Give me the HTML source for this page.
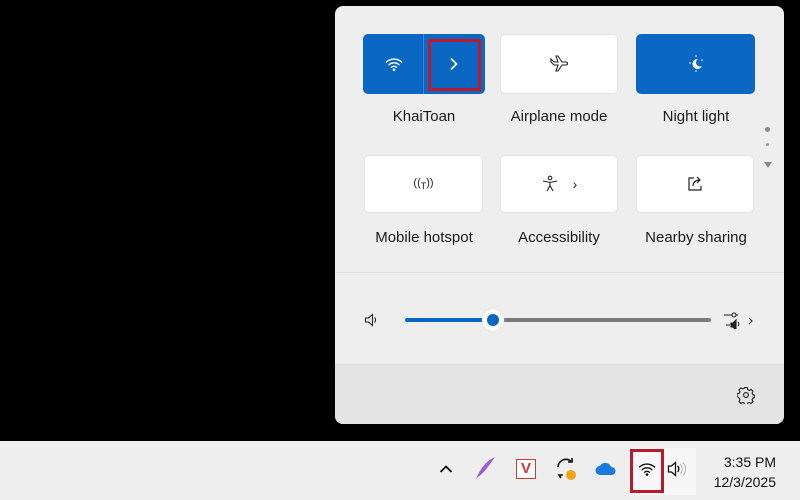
<!DOCTYPE html>
<html><head><meta charset="utf-8"><style>
*{margin:0;padding:0;box-sizing:border-box}
body{width:800px;height:500px;background:#000;position:relative;overflow:hidden;font-family:"Segoe UI","Liberation Sans",sans-serif}
.panel{position:absolute;left:335px;top:6px;width:449px;height:418px;background:#eeeeee;border-radius:8px;overflow:hidden}
.foot{position:absolute;left:0;top:358px;width:100%;height:60px;background:#e4e4e4;border-top:1px solid #dcdcdc}
.div{position:absolute;left:0;top:266px;width:100%;height:1px;background:#e0e0e0}
.tile{position:absolute;height:60px;border-radius:5px;background:#fff;border:1px solid #e3e3e3;display:flex;align-items:center;justify-content:center}
.blue{background:#0a67c4;border-color:#0a67c4}
.lbl{position:absolute;width:130px;text-align:center;font-size:15px;color:#1a1a1a}
.tb{position:absolute;left:0;top:441px;width:800px;height:59px;background:#eeeeee}
</style></head><body>
<div class="panel">
 <div class="tile blue" style="left:28px;top:28px;width:122px;"></div>
 <div style="position:absolute;left:88px;top:28px;width:1px;height:60px;background:#3d86d0"></div>
 <svg style="position:absolute;left:50px;top:50px" width="18" height="16" viewBox="0 0 18 16"><g fill="none" stroke="#fff" stroke-width="1.4" stroke-linecap="round"><path d="M1.5 6a11 11 0 0 1 15 0"/><path d="M4 8.8a7.3 7.3 0 0 1 10 0"/><path d="M6.5 11.3a3.6 3.6 0 0 1 5 0"/></g><circle cx="9" cy="13.8" r="1.3" fill="#fff"/></svg>
 <div style="position:absolute;left:93px;top:33px;width:53px;height:52px;border:3px solid #c0182c"></div>
 <svg style="position:absolute;left:114px;top:51px" width="10" height="14" viewBox="0 0 10 14"><path d="M2 1.5l5.5 5.5L2 12.5" fill="none" stroke="#fff" stroke-width="1.8"/></svg>

 <div class="tile" style="left:165px;top:28px;width:118px"><svg width="20" height="18" viewBox="0 0 20 18"><path d="M2 6l3 3h4l-2 6h2l4-6h4a1.5 1.5 0 0 0 0-3h-4L9 0H7l2 6H5L2 3z" fill="none" stroke="#222" stroke-width="1.1" transform="translate(0 1)"/></svg></div>
 <div class="tile blue" style="left:301px;top:28px;width:119px"><svg width="20" height="20" viewBox="0 0 20 20"><path d="M12 5a5 5 0 1 0 4 7a4 4 0 0 1-4-7z" fill="#fff"/><g fill="#fff"><circle cx="10" cy="2" r=".8"/><circle cx="4" cy="9" r=".8"/><circle cx="16" cy="6" r=".8"/><circle cx="10" cy="17" r=".8"/></g></svg></div>

 <div class="lbl" style="left:24px;top:102px">KhaiToan</div>
 <div class="lbl" style="left:159px;top:102px">Airplane mode</div>
 <div class="lbl" style="left:296px;top:102px">Night light</div>

 <div style="position:absolute;left:430px;top:121px;width:5px;height:5px;border-radius:50%;background:#8a8a8a"></div>
 <div style="position:absolute;left:431px;top:137px;width:3px;height:3px;border-radius:50%;background:#9a9a9a"></div>
 <svg style="position:absolute;left:429px;top:156px" width="8" height="7"><path d="M0 0h8L4 6z" fill="#888"/></svg>

 <div class="tile" style="left:29px;top:149px;width:119px;height:58px"><span style="font-size:11px;color:#222">((<sub style="font-size:9px">T</sub>))</span></div>
 <div class="tile" style="left:165px;top:149px;width:118px;height:58px"><svg width="18" height="18" viewBox="0 0 18 18"><g fill="none" stroke="#222" stroke-width="1.1"><circle cx="9" cy="3" r="1.8"/><path d="M2 6l7 1.5L16 6M9 7.5v3M6 16l3-5.5 3 5.5"/></g></svg><span style="margin-left:14px;font-size:14px;color:#222">›</span></div>
 <div class="tile" style="left:301px;top:149px;width:118px;height:58px"><svg width="18" height="18" viewBox="0 0 18 18"><g fill="none" stroke="#222" stroke-width="1.2"><path d="M8 3H3v12h12v-4"/><path d="M7 11c0-4 3-6 7-6M11 2l3 3-3 3"/></g></svg></div>

 <div class="lbl" style="left:24px;top:223px">Mobile hotspot</div>
 <div class="lbl" style="left:159px;top:223px">Accessibility</div>
 <div class="lbl" style="left:296px;top:223px">Nearby sharing</div>

 <div class="div"></div>

 <svg style="position:absolute;left:29px;top:307px" width="14" height="14" viewBox="0 0 14 14"><path d="M1.5 5h3l4-3.5v11l-4-3.5h-3z M10.5 4.5a3.5 3.5 0 0 1 0 5" fill="none" stroke="#222" stroke-width="1.1"/></svg>
 <div style="position:absolute;left:70px;top:312px;width:88px;height:4px;border-radius:2px;background:#0a67c4"></div>
 <div style="position:absolute;left:158px;top:312px;width:218px;height:4px;border-radius:2px;background:#7a7a7a"></div>
 <div style="position:absolute;left:147px;top:303px;width:22px;height:22px;border-radius:50%;background:#fff;box-shadow:0 0 1px #bbb"></div>
 <div style="position:absolute;left:152px;top:308px;width:12px;height:12px;border-radius:50%;background:#0a67c4"></div>
 <svg style="position:absolute;left:389px;top:305px" width="30" height="18" viewBox="0 0 30 18"><g fill="none" stroke="#222" stroke-width="1.1"><path d="M0 4h14M2 14h4"/><circle cx="10" cy="4" r="2" fill="#eee"/><path d="M7 12h2l3-3v10l-3-3H7z" fill="#222"/><path d="M14 11a3 3 0 0 1 0 4"/><path d="M25 7l3 3-3 3"/></g></svg>

 <div class="foot"></div>
 <svg style="position:absolute;left:402px;top:380px" width="18" height="18" viewBox="0 0 24 24"><g fill="none" stroke="#222" stroke-width="1.5"><circle cx="12" cy="12" r="3.2"/><path d="M10.3 2h3.4l.6 2.8 2 1 2.6-1.2 2.4 2.4-1.2 2.6 1 2 2.8.6v3.4l-2.8.6-1 2 1.2 2.6-2.4 2.4-2.6-1.2-2 1-.6 2.8h-3.4l-.6-2.8-2-1-2.6 1.2-2.4-2.4 1.2-2.6-1-2L.1 13.7v-3.4l2.8-.6 1-2L2.7 5.1 5.1 2.7l2.6 1.2 2-1z"/></g></svg>
</div>

<div class="tb">
 <svg style="position:absolute;left:439px;top:23px" width="14" height="10"><path d="M1.5 8l5.5-5.5L12.5 8" fill="none" stroke="#111" stroke-width="1.8"/></svg>
 <svg style="position:absolute;left:474px;top:14px" width="22" height="26" viewBox="0 0 22 26"><path d="M2 24C6 14 12 6 21 2C16 9 11 17 4 22z" fill="#9b5ed8"/></svg>
 <div style="position:absolute;left:516px;top:18px;width:20px;height:20px;border:1.5px solid #d23a3a;background:#fff;color:#d23a3a;font-weight:bold;font-size:15px;line-height:17px;text-align:center">V</div>
 <svg style="position:absolute;left:555px;top:15px" width="24" height="26" viewBox="0 0 24 26"><g fill="none" stroke="#111" stroke-width="1.6"><path d="M3 11a8 8 0 0 1 14-5M17 2v4h-4"/><path d="M6 22l-2-3h4"/></g><circle cx="16" cy="19" r="5" fill="#f4a21a"/></svg>
 <svg style="position:absolute;left:595px;top:21px" width="22" height="14" viewBox="0 0 22 14"><path d="M5 13a4.5 4.5 0 0 1 0-9a6 6 0 0 1 11 1a4 4 0 0 1 1 8z" fill="#1a7ae0"/></svg>
 <div style="position:absolute;left:630px;top:7px;width:66px;height:47px;background:#f7f7f7"></div>
 <div style="position:absolute;left:630px;top:8px;width:34px;height:44px;border:3px solid #b71c2c"></div>
 <svg style="position:absolute;left:638px;top:20px" width="18" height="16" viewBox="0 0 18 16"><g fill="none" stroke="#111" stroke-width="1.3" stroke-linecap="round"><path d="M1.5 6a11 11 0 0 1 15 0"/><path d="M4 8.8a7.3 7.3 0 0 1 10 0"/><path d="M6.5 11.3a3.6 3.6 0 0 1 5 0"/></g><circle cx="9" cy="13.6" r="1.3" fill="#111"/></svg>
 <svg style="position:absolute;left:667px;top:20px" width="22" height="16" viewBox="0 0 22 16"><path d="M1.5 5h3l4-3.5v13l-4-3.5h-3z M10.5 5a4 4 0 0 1 0 6" fill="none" stroke="#111" stroke-width="1.3"/><path d="M13 3a7 7 0 0 1 0 10M16 1.5a9.5 9.5 0 0 1 0 13" fill="none" stroke="#bbb" stroke-width="1.2"/></svg>
 <div style="position:absolute;left:700px;top:11px;width:76px;text-align:right;font-size:14px;color:#111;line-height:20px">3:35 PM<br>12/3/2025</div>
</div>
</body></html>
